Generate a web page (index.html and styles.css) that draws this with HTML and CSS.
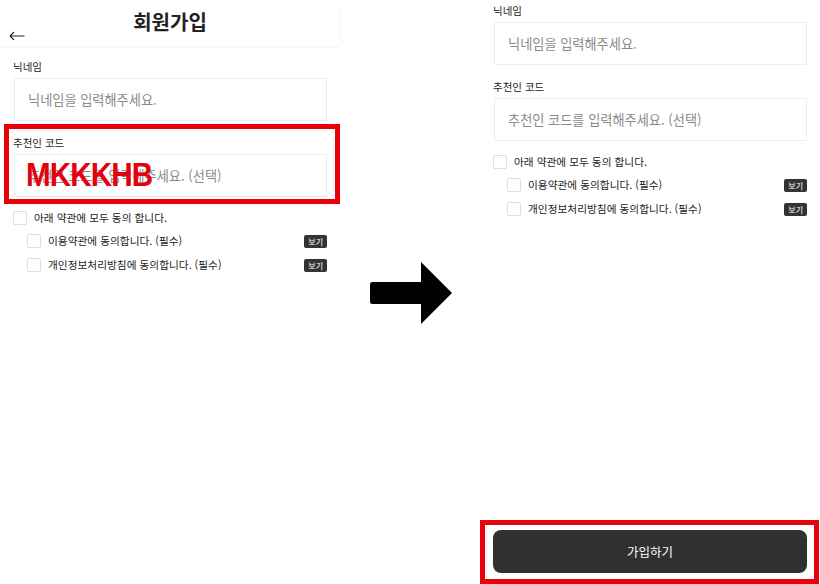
FILE: index.html
```html
<!DOCTYPE html>
<html lang="ko">
<head>
<meta charset="utf-8">
<title>회원가입</title>
<link rel="stylesheet" href="styles.css">
</head>
<body>
<div class="stage">
  <section class="phone phone-left">
    <header class="topbar">
      <div class="back">
        <svg width="16" height="10" viewBox="0 0 16 10" aria-hidden="true"><path d="M15.5 5H1M5 1L1 5L5 9" fill="none" stroke="#222" stroke-width="1.1"/></svg>
      </div>
      <h1 class="title">회원가입</h1>
      <div></div>
    </header>
    <form class="form">
      <label class="label">닉네임</label>
      <input class="field" type="text" placeholder="닉네임을 입력해주세요.">
      <label class="label label-next">추천인 코드</label>
      <input class="field" type="text" placeholder="추천인 코드를 입력해주세요. (선택)">
      <div class="agree">
        <div class="row row-all"><span class="box"></span><span class="row-text">아래 약관에 모두 동의 합니다.</span></div>
        <div class="row row-sub"><span class="box"></span><span class="row-text">이용약관에 동의합니다. (필수)</span><span class="view">보기</span></div>
        <div class="row row-sub row-last"><span class="box"></span><span class="row-text">개인정보처리방침에 동의합니다. (필수)</span><span class="view">보기</span></div>
      </div>
    </form>
    <div class="mark mark-code"></div>
    <div class="stamp">MKKKHB</div>
  </section>

  <div class="between">
    <svg class="arrow" width="82" height="62" viewBox="0 0 82 62" aria-hidden="true">
      <rect x="0" y="20" width="54" height="22" rx="2.5" fill="#000"/>
      <polygon points="51,0 82,31 51,62" fill="#000"/>
    </svg>
  </div>

  <section class="phone phone-right">
    <form class="form form-scrolled">
      <label class="label">닉네임</label>
      <input class="field" type="text" placeholder="닉네임을 입력해주세요.">
      <label class="label label-next">추천인 코드</label>
      <input class="field" type="text" placeholder="추천인 코드를 입력해주세요. (선택)">
      <div class="agree">
        <div class="row row-all"><span class="box"></span><span class="row-text">아래 약관에 모두 동의 합니다.</span></div>
        <div class="row row-sub"><span class="box"></span><span class="row-text">이용약관에 동의합니다. (필수)</span><span class="view">보기</span></div>
        <div class="row row-sub row-last"><span class="box"></span><span class="row-text">개인정보처리방침에 동의합니다. (필수)</span><span class="view">보기</span></div>
      </div>
    </form>
    <div class="footer">
      <button class="submit" type="button">가입하기</button>
    </div>
    <div class="mark mark-submit"></div>
  </section>
</div>
</body>
</html>
```

FILE: styles.css
```css
* { box-sizing: border-box; }

html, body {
  margin: 0;
  padding: 0;
  background: #fff;
}

body {
  font-family: "Noto Sans CJK KR", "Noto Sans", sans-serif;
  color: #222;
}

.stage {
  display: flex;
  width: 820px;
  height: 584px;
  overflow: hidden;
}

.phone {
  position: relative;
  width: 340px;
  height: 584px;
  flex: 0 0 340px;
  display: flex;
  flex-direction: column;
}

/* header */
.topbar {
  display: grid;
  grid-template-columns: 1fr auto 1fr;
  height: 46px;
  box-shadow: 0 1px 3px rgba(0, 0, 0, 0.06);
}

.back {
  padding: 31px 0 0 9px;
  line-height: 0;
}

.title {
  margin: 0;
  padding-top: 9px;
  font-size: 20px;
  line-height: 26px;
  font-weight: 700;
  color: #222;
}

/* form */
.form {
  display: flex;
  flex-direction: column;
  padding: 14px 13px 0 14px;
}

.form-scrolled {
  padding-top: 4px;
}

.label {
  display: block;
  margin-left: -1px;
  font-size: 10.5px;
  line-height: 14px;
  font-weight: 400;
  color: #222;
}

.label-next {
  margin-top: 15px;
}

.field {
  display: block;
  width: 100%;
  height: 43px;
  margin: 4px 0 0;
  padding: 0 13px;
  border: 1px solid #ededed;
  border-radius: 1px;
  background: #fff;
  font-family: "Noto Sans CJK KR", "Noto Sans", sans-serif;
  font-size: 13.2px;
  color: #222;
  outline: none;
}

.field::placeholder {
  color: #8a8a8a;
}

.agree {
  display: flex;
  flex-direction: column;
  margin-top: 14px;
}

.row {
  display: flex;
  align-items: center;
  height: 14px;
}

.row-all {
  margin-left: -1px;
}

.row-sub {
  margin-top: 9px;
  padding-left: 13px;
}

.row-last {
  margin-top: 10px;
}

.box {
  width: 14px;
  height: 14px;
  flex: 0 0 14px;
  border: 1px solid #dedede;
  border-radius: 2px;
  background: #fff;
}

.row-text {
  margin-left: 7px;
  font-size: 10.7px;
  line-height: 14px;
  color: #222;
  white-space: nowrap;
}

.view {
  margin-left: auto;
  height: 13px;
  padding: 0 4px;
  border-radius: 2px;
  background: #333;
  color: #fff;
  font-size: 8px;
  line-height: 13px;
}

/* middle arrow */
.between {
  flex: 0 0 140px;
  padding: 262px 0 0 30px;
}

.arrow {
  display: block;
}

/* footer button */
.footer {
  margin-top: auto;
  padding: 0 13px 11px 13px;
}

.submit {
  display: block;
  width: 100%;
  height: 43px;
  border: 0;
  border-radius: 8px;
  background: #303030;
  color: #fff;
  font-family: "Noto Sans CJK KR", "Noto Sans", sans-serif;
  font-size: 12.5px;
  cursor: pointer;
}

/* annotation overlays */
.mark {
  position: absolute;
  border: 5px solid #e8000b;
  pointer-events: none;
}

.mark-code {
  left: 4px;
  top: 124px;
  width: 336px;
  height: 80px;
}

.mark-submit {
  left: 0;
  top: 520px;
  width: 339px;
  height: 64px;
}

.stamp {
  position: absolute;
  left: 26px;
  top: 157px;
  font-family: "Liberation Sans", Arial, sans-serif;
  font-weight: 700;
  font-size: 34px;
  line-height: 34px;
  letter-spacing: -1px;
  color: #e5000f;
  transform: scaleX(0.87);
  transform-origin: left top;
  pointer-events: none;
}
```
